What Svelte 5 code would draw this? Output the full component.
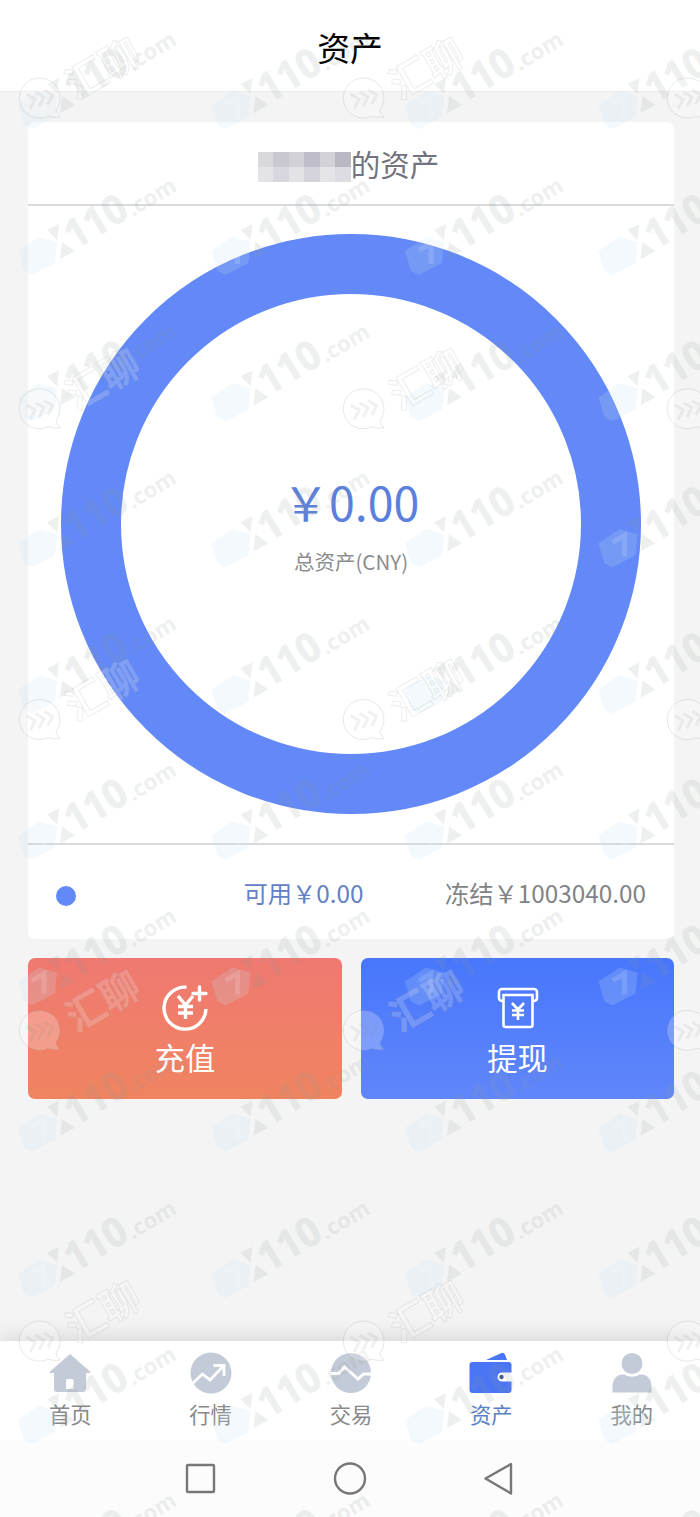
<script>
    let total = "0.00";
    let available = "0.00";
    let frozen = "1003040.00";
    let active = "assets";

    let tabs = [
        { id: "home", name: "首页" },
        { id: "market", name: "行情" },
        { id: "trade", name: "交易" },
        { id: "assets", name: "资产" },
        { id: "mine", name: "我的" }
    ];

    // masked user name, two rows of blocks
    let mask = [
        "#d9d9dc", "#c9c8d0", "#d2d1d7", "#bfbec8", "#d3d2d8", "#b9b8c3",
        "#e4e4e8", "#d8d7df", "#e2e2e7", "#d5d4dc", "#e4e4e9", "#dcdce2"
    ];

    let marks = [];
    for (let row = 0; row < 11; row++) {
        for (let col = 0; col < 4; col++) {
            marks.push({ x: 40 + col * 193.5, y: 105 + row * 146.1 });
        }
    }

    let chats = [];
    for (let row = 0; row < 5; row++) {
        for (let col = 0; col < 3; col++) {
            chats.push({ x: 40 + col * 324, y: 98 + row * 310.8 });
        }
    }
</script>

<div class="page">
    <header class="header">
        <h1>资产</h1>
    </header>

    <main>
        <section class="card">
            <div class="owner">
                <span class="mask">
                    {#each mask as color}
                        <i style="background: {color}"></i>
                    {/each}
                </span>
                <span>的资产</span>
            </div>
            <div class="chart">
                <div class="ring">
                    <strong>￥{total}</strong>
                    <span>总资产(CNY)</span>
                </div>
            </div>
            <div class="legend">
                <span class="dot"></span>
                <span class="available">可用￥{available}</span>
                <span>冻结￥{frozen}</span>
            </div>
        </section>

        <div class="actions">
            <button class="recharge">
                <svg width="48" height="48" viewBox="0 0 48 48" fill="none" stroke="#fff" stroke-width="3.4">
                    <path d="M25.500 4.200A21 21 0 1 0 45 26" />
                    <path d="M38.500 4v13M32 10.500H45" stroke-linecap="round" />
                    <path d="M17 13l7.500 9 7.500-9M24.500 22v14M17 23.500h15M17 30h15" />
                </svg>
                <span>充值</span>
            </button>
            <button class="withdraw">
                <svg width="48" height="48" viewBox="0 0 48 48" fill="none" stroke="#fff" stroke-width="2.6">
                    <path d="M9 18H8a3 3 0 0 1-3-3V9a3 3 0 0 1 3-3h32a3 3 0 0 1 3 3v6a3 3 0 0 1-3 3h-1" />
                    <path d="M9.500 12h29v30a2 2 0 0 1-2 2h-25a2 2 0 0 1-2-2z" />
                    <path d="M18 20l6 6.500 6-6.500M24 26.500v10.500M18 27.500h12M18 32h12" />
                </svg>
                <span>提现</span>
            </button>
        </div>
    </main>

    <nav class="tabs">
        {#each tabs as tab}
            <div class="tab" class:active={active === tab.id} on:click={() => active = tab.id} role="button" tabindex="0" on:keydown={() => {}}>
                <svg width="44" height="42" viewBox="0 0 44 42">
                    {#if tab.id === "home"}
                        <path fill="currentColor" fill-rule="evenodd" d="M22 2L42 19.500Q43 21 41 21H38v16a3 3 0 0 1-3 3H9a3 3 0 0 1-3-3V21H3Q1 21 2 19.500zM19.500 27a1.500 1.500 0 0 0-1.500 1.500V37h7.500v-8.500A1.500 1.500 0 0 0 24 27z" />
                    {:else if tab.id === "market"}
                        <circle cx="22" cy="21" r="20.500" fill="currentColor" />
                        <path d="M4 31l9.500-9 7.500 6L34 14.500M24.500 13.500h10.500v10.500" fill="none" stroke="#fff" stroke-width="2.8" />
                    {:else if tab.id === "trade"}
                        <circle cx="22" cy="21" r="20" fill="currentColor" />
                        <path d="M0 21.500h9.500l6-6.500L29 27l5.500-5H44" fill="none" stroke="#fff" stroke-width="3" />
                    {:else if tab.id === "assets"}
                        <path d="M17 8L32.500 1a3 3 0 0 1 3.500 1.500L38 8z" fill="currentColor" />
                        <path fill="currentColor" d="M3.500 10h36a3 3 0 0 1 3 3v7.500H33a4.500 4.500 0 0 0 0 9h9.500V38a3 3 0 0 1-3 3h-36a3 3 0 0 1-3-3V13a3 3 0 0 1 3-3z" />
                        <circle cx="32.500" cy="25" r="2.200" fill="#4a5c8c" />
                    {:else}
                        <circle cx="22" cy="11.500" r="10.500" fill="currentColor" />
                        <path fill="currentColor" d="M2.500 40.500V34Q3.500 22 14 22.500q8 4.500 16 0Q40.500 22 41.500 34v6.500z" />
                    {/if}
                </svg>
                <span>{tab.name}</span>
            </div>
        {/each}
    </nav>

    <footer class="system">
        <svg width="34" height="34" viewBox="0 0 34 34"><rect x="3" y="3" width="27" height="27" rx="1" /></svg>
        <svg width="34" height="34" viewBox="0 0 34 34"><circle cx="17" cy="16.500" r="15" /></svg>
        <svg width="34" height="34" viewBox="0 0 34 34"><path d="M3.500 16.500L29 2v29.500z" /></svg>
    </footer>

    <svg class="watermark" width="700" height="1517" viewBox="0 0 700 1517">
        <defs>
            <g id="fx">
                <path d="M-22 0L-1-14 17-9 15 12-8 24-16 20z" fill="#c3e2f2" opacity=".2" />
                <path d="M-8-1L4-8 4 13" fill="none" stroke="#fff" stroke-width="5" opacity=".14" />
                <g fill="#8d9a98" opacity=".14">
                    <path d="M7-21L19-27 17-11z" />
                    <path d="M22-9L35 0 20 8z" />
                    <g transform="rotate(-31)">
                        <text x="30" y="17" class="num" textLength="66" lengthAdjust="spacingAndGlyphs">110</text>
                        <text x="97" y="18.500" class="com">.com</text>
                    </g>
                </g>
            </g>
            <g id="chat">
                <path d="M0-20a20 20 0 1 0 8 38q5 2 12 1-4-4-4-7A20 20 0 0 0 0-20z" fill="#fff" fill-opacity=".24" stroke="#8c8c8c" stroke-opacity=".2" />
                <g fill="none" stroke="#888" stroke-opacity=".12" stroke-width="3" transform="rotate(-14)">
                    <path d="M-12-7l7 7-7 8M-3-7l7 7-7 8M6-7l7 7-7 8" />
                </g>
                <text x="30" y="20" class="brand" transform="rotate(-30)">汇聊</text>
            </g>
        </defs>
        {#each marks as m}
            <use href="#fx" x={m.x} y={m.y} />
        {/each}
        {#each chats as c}
            <use href="#chat" x={c.x} y={c.y} />
        {/each}
    </svg>
</div>

<style>
    :global(body) {
        background: #f4f4f4;
    }

    .page {
        position: relative;
        display: flex;
        flex-direction: column;
        width: 700px;
        height: 1517px;
        overflow: hidden;
        background: #f4f4f4;
        font-family: "Noto Sans CJK SC", sans-serif;
        color: #828386;
    }

    .header {
        display: flex;
        height: 92px;
        box-sizing: border-box;
        padding-top: 2px;
        align-items: center;
        justify-content: center;
        background: #fff;
        border-bottom: 1px solid #ebebeb;
    }

    .header h1 {
        margin: 0;
        font-size: 32.8px;
        font-weight: 400;
        color: #000;
    }

    main {
        flex: 1;
        padding: 30px 26px 0 28px;
    }

    .card {
        height: 817px;
        display: flex;
        flex-direction: column;
        background: #fff;
        border-radius: 7px;
    }

    .owner {
        display: flex;
        height: 84px;
        box-sizing: border-box;
        align-items: center;
        justify-content: center;
        padding: 2px 5px 0 0;
        font-size: 29.5px;
        color: #72737e;
        border-bottom: 2px solid #d9dadd;
    }

    .owner span:last-child {
        margin-top: -2px;
    }

    .mask {
        display: grid;
        grid-template-columns: repeat(6, 15.5px);
        grid-template-rows: 15px 15px;
        margin-top: 5px;
    }

    .chart {
        flex: 1;
        display: flex;
        align-items: center;
        justify-content: center;
    }

    .ring {
        display: flex;
        flex-direction: column;
        align-items: center;
        justify-content: center;
        width: 580px;
        height: 580px;
        margin-top: -1px;
        box-sizing: border-box;
        border: 60px solid #6289f7;
        border-radius: 50%;
    }

    .ring strong {
        margin-top: -3px;
        font-size: 46.5px;
        font-weight: 400;
        line-height: 64px;
        color: #5b7fdc;
    }

    .ring span {
        margin-top: 13px;
        font-size: 20.5px;
        line-height: 30px;
        color: #8b8c8e;
    }

    .legend {
        display: flex;
        height: 94px;
        padding: 0 28px;
        align-items: center;
        justify-content: space-between;
        border-top: 2px solid #d9dadd;
        font-size: 24.3px;
    }

    .dot {
        width: 20px;
        height: 20px;
        margin-top: 8px;
        border-radius: 50%;
        background: #6289f7;
    }

    .available {
        margin-left: 86px;
        color: #6480c6;
    }

    .actions {
        display: grid;
        grid-template-columns: 314px 313px;
        gap: 19px;
        margin-top: 19px;
    }

    .actions button {
        display: flex;
        flex-direction: column;
        align-items: center;
        height: 141px;
        padding: 25px 0 0;
        border: 0;
        border-radius: 7px;
        font-family: inherit;
        font-size: 30.3px;
        line-height: 44px;
        color: #fff;
    }

    .actions button span {
        margin-top: 4px;
    }

    .recharge {
        background: linear-gradient(#ef7971, #f08460);
    }

    .withdraw {
        background: linear-gradient(#4877fc, #6086fa);
    }

    .tabs {
        display: grid;
        grid-template-columns: repeat(5, 140.4px);
        height: 99px;
        background: #fff;
        box-shadow: 0 -4px 20px rgba(0, 0, 0, 0.12);
    }

    .tab {
        display: flex;
        flex-direction: column;
        align-items: center;
        padding-top: 11px;
        font-size: 21.3px;
        line-height: 32px;
        cursor: pointer;
    }

    .tab svg {
        color: #c3cbd8;
    }

    .tab span {
        margin-top: 4px;
        color: #888;
    }

    .tab.active svg {
        color: #4a76f5;
    }

    .tab.active span {
        color: #5b7fc6;
    }

    .system {
        display: flex;
        height: 77px;
        position: relative;
        align-items: center;
        justify-content: center;
        gap: 115px;
        background: #fcfcfc;
    }

    .system svg {
        fill: none;
        stroke: #777;
        stroke-width: 2.4;
        stroke-linejoin: round;
    }

    /* lies over the whole screen */
    .watermark {
        position: absolute;
        top: 0;
        left: 0;
        pointer-events: none;
    }

    .num {
        font: 700 40px "Open Sans", sans-serif;
        stroke: #8d9a98;
        stroke-width: 0.8;
    }

    .com {
        font: 700 22px "Open Sans", sans-serif;
    }

    .brand {
        font: 700 39px "Noto Sans CJK SC", sans-serif;
        fill: #fff;
        fill-opacity: 0.2;
        stroke: #aaa;
        stroke-opacity: 0.22;
        stroke-width: 1;
    }
</style>
